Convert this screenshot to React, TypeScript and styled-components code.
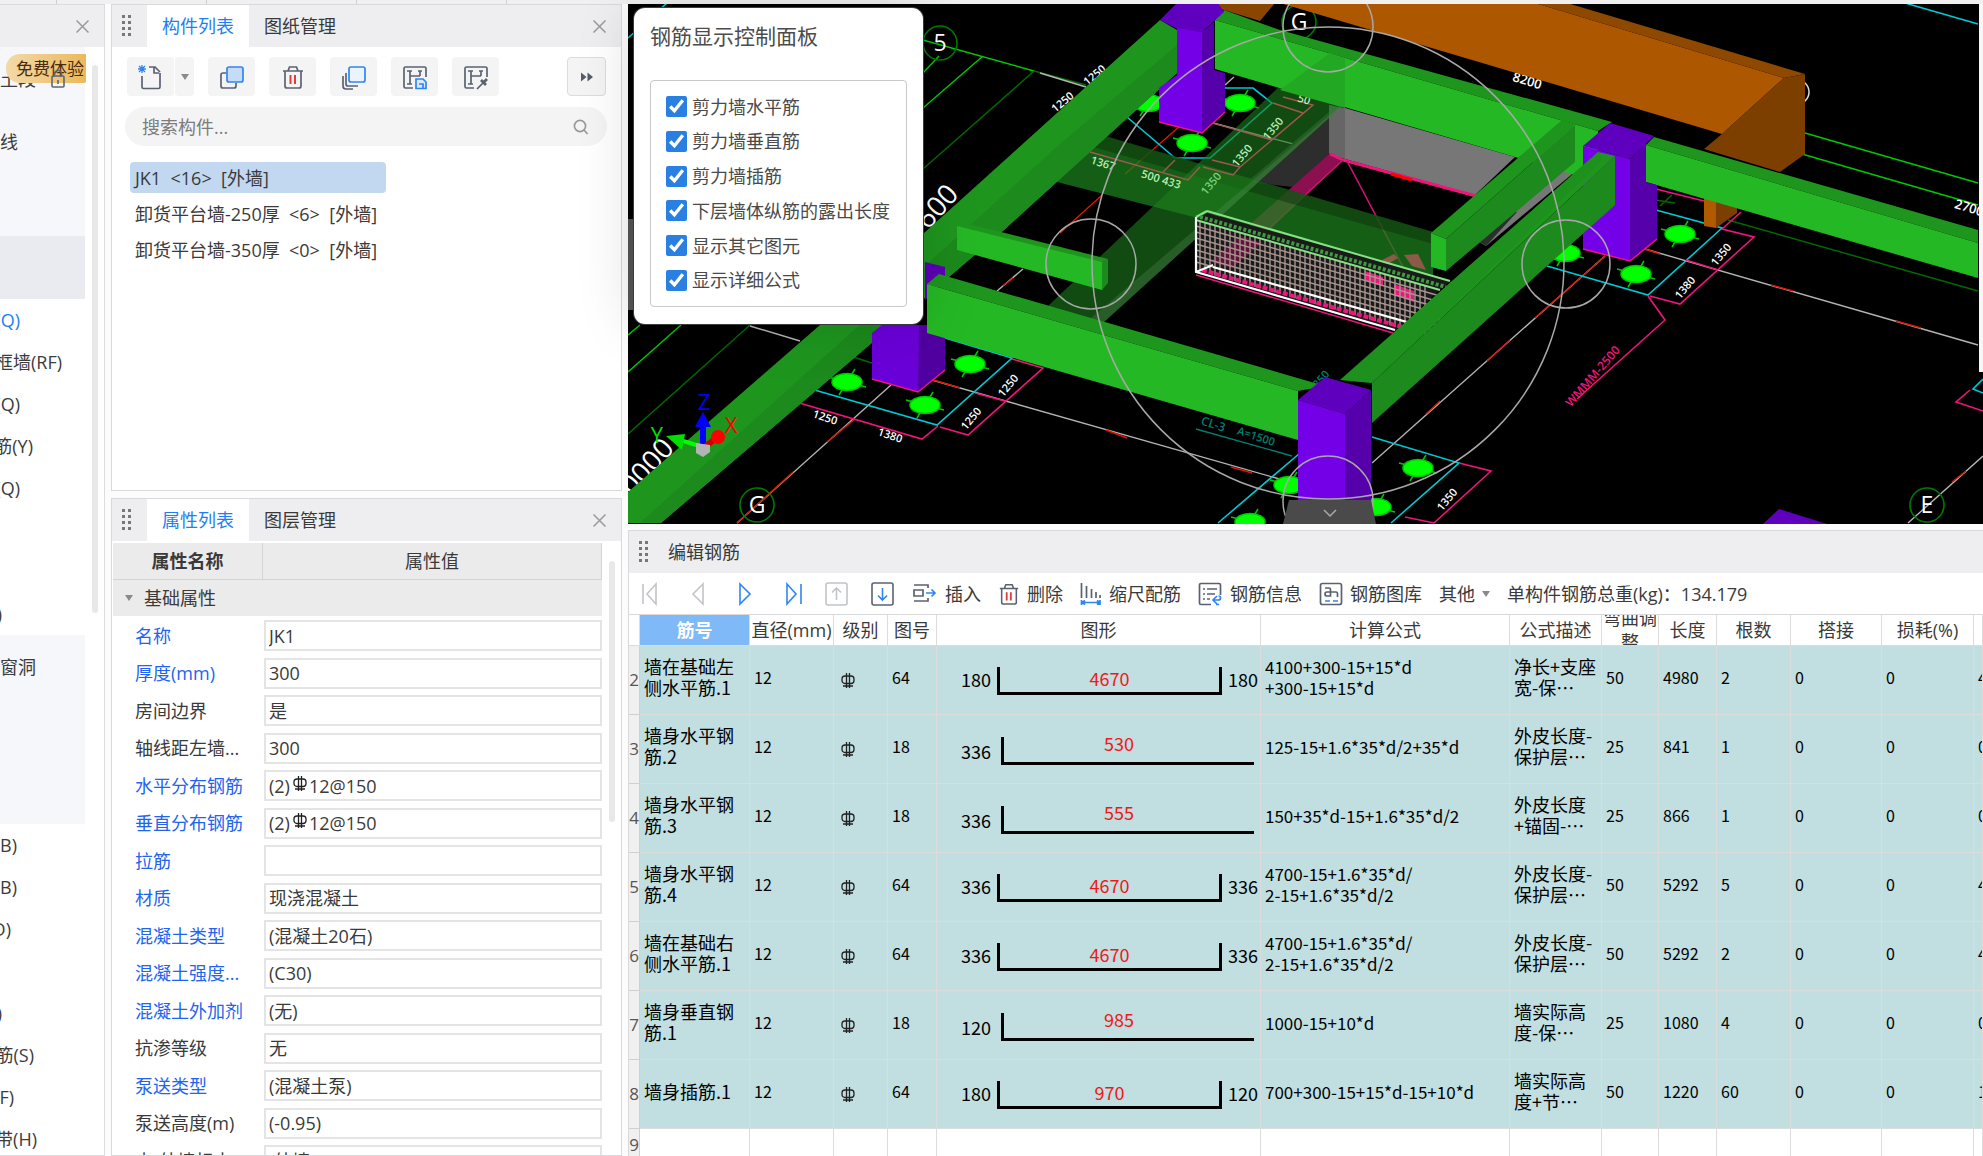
import React, { useState } from 'react';
import styled, { createGlobalStyle, css } from 'styled-components';

const Global = createGlobalStyle`
  * { box-sizing: border-box; }
  body { margin: 0; background: #fcfcfd; color: #3a3a3a; font-family: "Open Sans", "Noto Sans CJK SC", sans-serif; font-size: 18px; line-height: 24px; }
  button, input { font: inherit; color: inherit; }
  button { cursor: pointer; border: 0; background: none; padding: 0; }
`;

/* ---------- shell ---------- */
const Shell = styled.div`
  display: flex;
  flex-direction: column;
  height: 100vh;
  min-height: 700px;
  overflow: hidden;
`;
const RibbonEdge = styled.div`
  flex: none;
  height: 4px;
  background: #f0f0f0;
  display: grid;
  grid-template-columns: 57px repeat(3, 150px) 1fr;
`;
const RibbonGroup = styled.i`
  border-right: 1px solid #d0d0d0;
  &:last-child { border: 0; }
`;
const Columns = styled.main`
  flex: 1;
  min-height: 0;
  display: grid;
  grid-template-columns: 105px 512px minmax(0, 1fr);
  column-gap: 5px;
`;
const TitleBar = styled.header`
  flex: none;
  display: flex;
  align-items: center;
  height: 42px;
  padding: 0 15px 0 9px;
  background: #eeeef0;
`;
const Spacer = styled.span`
  flex: 1;
`;
const CloseButton = styled.button`
  display: flex;
`;

/* ---------- module tree ---------- */
const Side = styled.nav`
  position: relative;
  display: flex;
  flex-direction: column;
  overflow: hidden;
  border: 1px solid #dcdcdf;
  border-left: 0;
  background: #fff;
`;
const SideGroup = styled.div<{ $tint?: boolean; $row: number }>`
  flex: none;
  width: 85px;
  background: ${(p) => (p.$tint ? '#f5f7fa' : 'transparent')};
  display: grid;
  grid-auto-rows: ${(p) => p.$row}px;
`;
const SideItem = styled.a<{ $end: number; $active?: boolean; $open?: boolean }>`
  display: flex;
  align-items: center;
  justify-content: flex-end;
  padding-right: ${(p) => 85 - p.$end}px;
  overflow: hidden;
  white-space: nowrap;
  text-decoration: none;
  color: ${(p) => (p.$active ? '#1f80f0' : '#3c3c3c')};
  background: ${(p) => (p.$open ? '#e9ebf0' : 'transparent')};
`;
const SideThumb = styled.i`
  position: absolute;
  left: 92px;
  top: 60px;
  width: 6px;
  height: 548px;
  border-radius: 3px;
  background: #e8e8e8;
`;
const TrialBadge = styled.span`
  position: absolute;
  left: 6px;
  top: 49px;
  width: 80px;
  height: 29px;
  border-radius: 14px 0 2px 14px;
  padding-left: 10px;
  font-size: 17px;
  line-height: 29px;
  white-space: nowrap;
  color: #4a2a08;
  background: linear-gradient(90deg, #f3d9aa, #ebb95c);
`;
const LockSlot = styled.span`
  position: absolute;
  left: 50px;
  top: 64px;
  display: flex;
`;

/* ---------- middle docks ---------- */
const Middle = styled.div`
  display: flex;
  flex-direction: column;
  gap: 7px;
  min-height: 0;
  padding-left: 1px;
`;
const Dock = styled.section<{ $height?: number }>`
  display: flex;
  flex-direction: column;
  min-height: 0;
  overflow: hidden;
  border: 1px solid #d9d9dc;
  background: #fff;
  flex: ${(p) => (p.$height ? `0 0 ${p.$height}px` : '1')};
`;
const Tabs = styled.div`
  display: flex;
  align-self: stretch;
  margin-left: 15px;
`;
const Tab = styled.button<{ $on?: boolean }>`
  padding: 0 15px;
  color: ${(p) => (p.$on ? '#1f7ef0' : '#3a3a3a')};
  background: ${(p) => (p.$on ? '#fff' : 'transparent')};
`;
const ToolRow = styled.div`
  display: flex;
  gap: 14px;
  padding: 10px 15px 11px 15px;
`;
const toolFace = css`
  display: flex;
  align-items: center;
  justify-content: center;
  height: 39px;
  background: #f4f4f4;
  border-radius: 4px;
`;
const Tool = styled.button`
  ${toolFace}
  width: 47px;
`;
const SplitTool = styled.div`
  display: flex;
  gap: 1px;
`;
const DropTool = styled.button`
  ${toolFace}
  width: 19px;
`;
const MoreTool = styled.button`
  ${toolFace}
  width: 39px;
  border: 1px solid #dcdcdc;
`;
const Search = styled.label`
  display: flex;
  align-items: center;
  height: 39px;
  margin: 0 14px 0 13px;
  padding: 0 18px 0 17px;
  border-radius: 20px;
  background: #f4f4f4;
`;
const SearchInput = styled.input`
  flex: 1;
  border: 0;
  outline: 0;
  padding: 0;
  background: none;
  &::placeholder { color: #7c7c7c; opacity: 1; }
`;
const ComponentList = styled.div`
  display: flex;
  flex-direction: column;
  align-items: flex-start;
  gap: 5px;
  padding: 16px 18px;
`;
const ComponentItem = styled.button<{ $on?: boolean }>`
  width: 256px;
  height: 31px;
  padding-left: 5px;
  text-align: left;
  white-space: pre;
  border-radius: 4px;
  background: ${(p) => (p.$on ? '#c1d8f0' : 'transparent')};
`;

/* ---------- property list ---------- */
const PropBody = styled.div`
  display: flex;
  min-height: 0;
  overflow: hidden;
  padding-top: 2px;
`;
const PropGrid = styled.div`
  width: 490px;
  padding-left: 1px;
`;
const PropHead = styled.div`
  display: grid;
  grid-template-columns: 150px 1fr;
  height: 37px;
  background: #ebebeb;
  border-bottom: 1px solid #d4d4d4;
`;
const PropHeadCell = styled.div<{ $strong?: boolean }>`
  display: flex;
  align-items: center;
  justify-content: center;
  border-right: 1px solid #d4d4d4;
  font-weight: ${(p) => (p.$strong ? 600 : 400)};
`;
const PropGroup = styled.button`
  display: flex;
  align-items: center;
  gap: 11px;
  width: 100%;
  height: 36px;
  padding-left: 12px;
  margin-bottom: 1px;
  background: #ebebeb;
`;
const PropRow = styled.div`
  display: grid;
  grid-template-columns: 129px 1fr;
  align-items: center;
  height: 37px;
  padding-left: 22px;
  &:nth-child(even) { height: 38px; }
`;
const PropLabel = styled.label<{ $key?: boolean }>`
  white-space: nowrap;
  color: ${(p) => (p.$key ? '#2264f0' : '#3a3a3a')};
`;
const Field = styled.div`
  display: flex;
  align-items: center;
  height: 31px;
  padding: 0 3px;
  border: 2px solid #e4e4e4;
`;
const FieldInput = styled.input`
  flex: 1;
  min-width: 0;
  border: 0;
  outline: 0;
  padding: 0;
  background: none;
`;
const FieldMark = styled.span`
  display: flex;
  padding: 0 2px 5px 3px;
`;
const PropThumb = styled.i`
  width: 6px;
  height: 261px;
  margin: 18px 0 0 7px;
  border-radius: 3px;
  background: #e8e8e8;
`;

/* ---------- work area ---------- */
const Work = styled.div`
  display: flex;
  flex-direction: column;
  gap: 6px;
  min-width: 0;
  min-height: 0;
  padding-left: 1px;
`;
const Viewport = styled.section`
  position: relative;
  flex: 0 0 520px;
  background: #000;
`;
const Scene = styled.svg`
  display: block;
  width: 100%;
  height: 100%;
`;
const Panel = styled.aside`
  position: absolute;
  left: 6px;
  top: 4px;
  width: 289px;
  padding: 15px 16px 17px;
  border-radius: 11px;
  background: #fff;
  box-shadow: 0 0 0 1px #3b3b3b, 0 0 60px rgba(0, 0, 0, 0.14);
`;
const PanelTitle = styled.h2`
  margin: 0 0 31px;
  font-size: 21px;
  line-height: 26px;
  font-weight: 400;
  color: #4c4c4c;
`;
const CheckGroup = styled.div`
  display: flex;
  flex-direction: column;
  justify-content: space-between;
  height: 227px;
  padding: 15px;
  border: 1px solid #c9c9c9;
  border-radius: 4px;
`;
const CheckRow = styled.label`
  display: flex;
  align-items: center;
  gap: 5px;
  height: 21px;
  white-space: nowrap;
  color: #4a4a4a;
`;
const Check = styled.input`
  width: 21px;
  height: 21px;
  margin: 0;
  accent-color: #2a80e2;
`;
const EditDock = styled.section`
  flex: 1;
  display: flex;
  flex-direction: column;
  min-height: 0;
  overflow: hidden;
  border-top: 1px solid #d9d9dc;
  border-left: 1px solid #d9d9dc;
  background: #fff;
`;
const DockTitle = styled.h2`
  margin: 0 0 0 19px;
  font-size: 18px;
  font-weight: 400;
`;
const EditTools = styled.div`
  flex: none;
  display: flex;
  align-items: center;
  height: 42px;
  padding-left: 11px;
  border-bottom: 1px solid #d9d9dc;
  white-space: nowrap;
`;
const NavButtons = styled.div`
  display: flex;
  align-items: center;
  gap: 20px;
  margin-right: 17px;
`;
const NavButton = styled.button`
  display: flex;
`;
const TextButton = styled.button`
  display: flex;
  align-items: center;
  gap: 7px;
  margin-right: 17px;
`;

/* ---------- bar table ---------- */
const BarTable = styled.table`
  width: 100%;
  table-layout: fixed;
  border-collapse: separate;
  border-spacing: 0;
  color: #000;
  font-family: "Noto Sans CJK SC", sans-serif;
`;
const Th = styled.th<{ $on?: boolean }>`
  height: 31px;
  padding: 0;
  font-family: "Open Sans", "Noto Sans CJK SC", sans-serif;
  font-weight: ${(p) => (p.$on ? 600 : 400)};
  color: ${(p) => (p.$on ? '#fff' : '#3a3a3a')};
  background: ${(p) => (p.$on ? '#80b9f8' : '#fff')};
  border-right: 1px solid #dcdcdc;
  border-bottom: 1px solid #dcdcdc;
`;
const ThClip = styled.div`
  display: flex;
  align-items: center;
  justify-content: center;
  height: 30px;
  overflow: hidden;
`;
const RowNo = styled.th`
  padding: 0;
  overflow: hidden;
  font: 400 17px/24px "Open Sans", sans-serif;
  color: #555;
  background: #f0f0f0;
  border-right: 1px solid #d0d0d0;
  border-bottom: 1px solid #d0d0d0;
`;
const Td = styled.td<{ $kind?: 'name' | 'num' | 'calc' | 'shape'; $blank?: boolean }>`
  height: ${(p) => (p.$blank ? 33 : 69)}px;
  padding: 0 0 6px 4px;
  overflow: hidden;
  white-space: pre;
  line-height: 21px;
  background: ${(p) => (p.$blank ? '#fff' : '#c1dee0')};
  border-right: 1px solid #dcdcdc;
  border-bottom: 1px solid #dcdcdc;
  font-size: ${(p) => (p.$kind === 'num' ? 16 : p.$kind === 'calc' ? 17 : 18)}px;
  ${(p) => p.$kind === 'shape' && css`padding: 0;`}
`;
const MarkCell = styled.span`
  display: flex;
  padding: 6px 0 0 3px;
`;
const UShape = styled.div`
  display: grid;
  grid-template-columns: 54px 225px 1fr;
  column-gap: 6px;
  align-items: center;
  height: 68px;
  padding-bottom: 2px;
  text-align: center;
`;
const BarEnd = styled.span`
  text-align: right;
`;
const UBar = styled.span`
  height: 28px;
  line-height: 22px;
  margin-top: 3px;
  color: #f21818;
  border: 3px solid #000;
  border-top: 0;
`;
const UTail = styled.span`
  text-align: left;
`;
const LShape = styled.div`
  display: grid;
  grid-template-columns: 54px 253px;
  column-gap: 10px;
  align-items: end;
  height: 68px;
  padding-bottom: 18px;
  line-height: 27px;
`;
const LBar = styled.span`
  height: 28px;
  line-height: 13px;
  padding-right: 20px;
  text-align: center;
  color: #f21818;
  border-left: 3px solid #000;
  border-bottom: 3px solid #000;
`;

/* ---------- icons ---------- */
const Cross = () => (
  <svg width="13" height="13" viewBox="0 0 13 13" stroke="#9a9a9c" strokeWidth="1.5"><path d="M0.5 0.5l12 12M12.5 0.5l-12 12" /></svg>
);
const Grip = () => (
  <svg width="11" height="22" viewBox="0 0 11 22" fill="#77777a">
    {[0, 6, 12, 18].map((y) => <g key={y}><rect x="1" y={y} width="3" height="3" /><rect x="7" y={y} width="3" height="3" /></g>)}
  </svg>
);
const Caret = () => <svg width="8" height="6" viewBox="0 0 8 6" fill="#8a8a8a"><path d="M0 0h8L4 6z" /></svg>;
const Magnifier = () => (
  <svg width="16" height="16" viewBox="0 0 16 16" fill="none" stroke="#999" strokeWidth="1.7"><circle cx="7" cy="7" r="5.6" /><path d="M11 11l3.6 4" /></svg>
);
const Lock = () => (
  <svg width="16" height="20" viewBox="0 0 16 20" fill="none" stroke="#5f6570" strokeWidth="1.6"><rect x="2" y="7" width="12" height="11" rx="1" /><path d="M4.500 7V5a3.500 3.500 0 0 1 7 0v2M8 11v4" /></svg>
);
const ink = { fill: 'none', stroke: '#5a6272', strokeWidth: 1.7 };
const NewIcon = () => (
  <svg width="26" height="26" viewBox="0 0 26 26" {...ink}>
    <path d="M11 3h6l5 5M16 3v6h5M22 9v14a1.500 1.500 0 0 1-1.500 1.500h-15A1.500 1.500 0 0 1 4 23V12" />
    <path d="M1 2l6 6M7 2L1 8M4 1v8M0 5h8" stroke="#2f86f0" strokeWidth="1.300" />
  </svg>
);
const CopyIcon = () => (
  <svg width="26" height="26" viewBox="0 0 26 26" {...ink}>
    <path d="M7 9H4a2 2 0 0 0-2 2v11a2 2 0 0 0 2 2h11a2 2 0 0 0 2-2v-3" /><rect x="8" y="3" width="16" height="15" rx="2" fill="#c5dbf6" stroke="#2f86f0" />
  </svg>
);
const TrashIcon = ({ size = 24 }: { size?: number }) => (
  <svg width={size} height={size + 2} viewBox="0 0 24 26" {...ink}>
    <path d="M2 7h20M7 7l1.500-4h7L17 7M4 7v15a2 2 0 0 0 2 2h12a2 2 0 0 0 2-2V7" /><path d="M9.500 11v9M14 11v9" stroke="#e03c3c" strokeWidth="2" />
  </svg>
);
const StackIcon = () => (
  <svg width="26" height="26" viewBox="0 0 26 26" {...ink}>
    <path d="M5 9v11a2 2 0 0 0 2 2h10M2 12v10a3 3 0 0 0 3 3h7" /><rect x="8" y="3" width="16" height="15" rx="2" fill="#eaf3fe" stroke="#2f86f0" />
  </svg>
);
const FrameIcon = ({ kind }: { kind: 'save' | 'pick' }) => (
  <svg width="26" height="26" viewBox="0 0 26 26" {...ink}>
    <path d="M11 24H3.500A1.500 1.500 0 0 1 2 22.500v-18A1.500 1.500 0 0 1 3.500 3h19A1.500 1.500 0 0 1 24 4.500V13" /><path d="M8 7v13M8 12h10M18 7v5M5 7h5M16 7h4M5 20h5" />
    {kind === 'save'
      ? <path d="M14 15h7l3 3v6.500H14zM17 20h4v4" stroke="#2f86f0" fill="#dbe9fb" />
      : <><path d="M14 25l7-7" /><path d="M18 16l5 5M21 18l3-3" strokeWidth="2.800" /></>}
  </svg>
);
const MoreIcon = () => <svg width="12" height="10" viewBox="0 0 12 10" fill="#555c68"><path d="M0 0.500L5.500 5 0 9.500zM6.500 0.500L12 5l-5.500 4.500z" /></svg>;
const RebarMark = () => (
  <svg width="14" height="15" viewBox="0 0 14 15" fill="none" stroke="#222" strokeWidth="1.300"><rect x="1" y="3" width="12" height="7.500" rx="3" /><path d="M5.500 0v15M8.500 0v15M2 13h10" /></svg>
);
const NavIcon = ({ d, on, box }: { d: string; on?: boolean; box?: boolean }) => (
  <svg width="26" height="24" viewBox="0 0 26 24" fill="none" stroke={on ? '#2f86f0' : '#c2c4c8'} strokeWidth="1.600">
    {box && <rect x="2" y="1" width="21" height="22" rx="2" stroke={on ? '#5a6272' : '#c2c4c8'} />}
    <path d={d} />
  </svg>
);
const InsertIcon = () => (
  <svg width="25" height="24" viewBox="0 0 25 24" {...ink}><path d="M1 3h14v3M1 19h14v-3M1 8h9v6H1z" /><path d="M13 11h9M18.500 7.500L22 11l-3.500 3.500" stroke="#2f86f0" /></svg>
);
const ScaleIcon = () => (
  <svg width="22" height="24" viewBox="0 0 22 24" {...ink}><path d="M1.500 1v15M6.500 4v12M11.500 7v9M16 10v6M20 13v3" /><path d="M1.500 18v5M20 18v5M2 20.500h18M5 18.500l-3 2 3 2M17 18.500l3 2-3 2" stroke="#2f86f0" /></svg>
);
const InfoIcon = () => (
  <svg width="25" height="24" viewBox="0 0 25 24" {...ink}><path d="M13 22.500H3A1.500 1.500 0 0 1 1.500 21V3A1.500 1.500 0 0 1 3 1.500h18A1.500 1.500 0 0 1 22.500 3v10M5 7h2M9 7h10M5 12h2M9 12h8M5 17h2M9 17h3" /><path d="M19 14l-4 4 4 4M15.500 18h5a2 2 0 0 0 0-4M18 22.500h3" stroke="#2f86f0" /></svg>
);
const LibIcon = () => (
  <svg width="24" height="24" viewBox="0 0 24 24" {...ink}><rect x="1.500" y="1.500" width="21" height="21" rx="2" /><path d="M6 6h4a1.500 1.500 0 0 1 1.500 1.500V14H8a2 2 0 0 1 0-4h9a1.500 1.500 0 0 1 1.500 1.500V15" /><path d="M6 19h5M14 19h5" stroke="#2f86f0" /></svg>
);

/* ---------- 3D scene ---------- */
const blobs = [[847, 382], [970, 364], [925, 405], [1148, 103], [1240, 103], [1192, 143], [1680, 234], [1636, 274], [1565, 253], [1418, 468], [1289, 485], [1250, 522], [1376, 507]];
type Note = [number, number, number, string, string, number];
const notes: Note[] = [
  [824, 421, 18, '1250', '#fff', 11], [889, 439, 18, '1380', '#fff', 11], [1011, 388, -50, '1250', '#fff', 11], [974, 421, -50, '1250', '#fff', 11],
  [1097, 78, -40, '1250', '#fff', 11], [1065, 105, -40, '1250', '#fff', 11], [1526, 85, 17, '8200', '#fff', 13], [1968, 212, 17, '2700', '#fff', 13],
  [1724, 257, -50, '1350', '#fff', 11], [1688, 290, -50, '1380', '#fff', 11], [1450, 502, -50, '1350', '#fff', 11],
  [944, 213, -48, '600', '#fff', 28], [654, 473, -48, '0000', '#fff', 28],
];
const slabNotes: Note[] = [
  [1102, 167, 17, '1367', '#b8f0b8', 11], [1160, 183, 17, '500 433', '#b8f0b8', 11], [1214, 186, -50, '1350', '#7fd07f', 11],
  [1245, 158, -50, '1350', '#b8f0b8', 11], [1276, 131, -50, '1350', '#b8f0b8', 11], [1303, 103, 17, '50', '#b8f0b8', 11],
];
const axisNames: [number, number, string][] = [[940, 43, '5'], [1299, 22, 'G'], [757, 505, 'G'], [1927, 505, 'E']];
const mesh = Array.from({ length: 46 }, (_, i) => 1200 + i * 5);
const F = 'Open Sans, sans-serif';
const top = '#1e961e';
const front = '#25b825';
const shade = '#1c8a1c';

const Label = ({ n }: { n: Note }) => (
  <text x={n[0]} y={n[1]} transform={`rotate(${n[2]} ${n[0]} ${n[1]})`} fill={n[4]} fontSize={n[5]} fontWeight={n[5] < 20 ? 600 : 400} fontFamily={F} textAnchor="middle">{n[3]}</text>
);

const Model = () => (
  <Scene viewBox="628 4 1355 520" preserveAspectRatio="xMinYMin slice" role="img" aria-label="三维钢筋模型">
    <rect x="628" y="3" width="1355" height="521" fill="#000" />
    <rect x="628" y="219" width="8" height="91" fill="#555" />
    <g fill="none" stroke="#00c800" strokeWidth="1.5">
      <path d="M923 40L1034 71M983 56L923 108M939 56L923 73M640 325L628 335M681 325L628 372M1805 133L1978 183M1802 154L1978 205" />
      <path d="M1034 71L923 169M750 325L628 434M1728 220L1978 291M1034 71L1086 85M1655 200L1675 203M1660 206L1672 195M847 355L875 364" stroke="#006a00" />
    </g>
    <g fill="none" stroke="#b4b4b4" strokeWidth="1.400">
      <path d="M750 326L800 341M1040 73L1086 87M932 380L1283 480M737 523L891 385M1645 249L1978 345M1605 256L1372 463M1908 523L1983 456M997 291L1023 269M1213 123L1347 158M1225 85L1234 77" />
      <path d="M737 523L793 472M827 442L855 419M930 379L960 388M1106 430L1127 438M1231 467L1252 473M1645 249L1660 254M1771 285L1793 291M1896 321L1921 328M1605 256L1535 318M1510 340L1487 361M1440 401L1426 414M1952 482L1966 471M1003 286L1013 278M1060 233L1101 196M1125 174L1180 126" stroke="#e01400" />
    </g>
    <g fill="none" stroke="#00c8d2" strokeWidth="1.600">
      <path d="M811 389L937 425L1012 358L945 338M1127 117L1175 158H1210L1272 103L1253 88H1225M1656 210L1722 228L1648 295L1547 266M1218 523L1300 453M1372 437L1459 463L1391 523M1905 3L1978 24M628 38L667 3M1983 379L1973 389L1983 393" />
    </g>
    <g fill="none" stroke="#f0147c" strokeWidth="1.600">
      <path d="M796 402L922 439L938 426M940 427L968 435L1043 368L1012 359M975 393L1005 401M1656 189L1704 201M1741 212L1722 229L1754 237L1680 304L1650 296M1686 260L1718 270M1648 296L1665 320L1577 399M1459 463L1491 471L1434 523L1405 517M1983 411L1956 402L1970 390" />
    </g>
    <g stroke="#00c800" strokeWidth="1.500">
      {blobs.map(([x, y]) => <g key={`${x}-${y}`}><path d={`M${x - 19} ${y - 5}l38 10M${x + 8} ${y - 13}l-16 26`} /><ellipse cx={x} cy={y} rx="15" ry="8.500" fill="#00ff00" /></g>)}
    </g>
    {notes.map((n, i) => <Label key={i} n={n} />)}
    <Label n={[1596, 379, -49, 'WMMM-2500', '#f0147c', 12]} />
    <g stroke="#00806e" strokeWidth="1.400"><path d="M1196 429L1292 456" /></g>
    <Label n={[1212, 428, 18, 'CL-3', '#00806e', 12]} />
    <Label n={[1255, 440, 18, 'A=1500', '#00806e', 11]} />
    <Label n={[1322, 384, -50, '1350', '#00806e', 11]} />
    <g fill="none" stroke="#007a00" strokeWidth="1.600">
      {axisNames.map(([x, y, s]) => <circle key={s + x} cx={x} cy={y} r="17" />)}
    </g>
    <circle cx="1797" cy="92" r="12" fill="none" stroke="#ddd" strokeWidth="1.500" />

    <path d="M1329 105L1345 108V159L1329 154z" fill="#666" />
    <path d="M1345 108L1515 157L1475 195L1345 159z" fill="#777" />
    <path d="M1329 112V154L1293 187L1247 182z" fill="#2d2d2d" />
    <path d="M1330 153L1343 160L1227 270L1207 263z" fill="#8c1050" />
    <path d="M1343 160L1476 196M1330 154L1343 160" stroke="#f0147c" strokeWidth="3" />
    <path d="M1347 161L1423 305M1343 160L1220 274" stroke="#c81470" strokeWidth="1.600" fill="none" />
    <path d="M1391 174L1412 180" stroke="#f00" strokeWidth="3" />
    <path d="M1575 160L1577 170L1486 246L1477 241z" fill="#777" />
    <path d="M1517 212L1505 211L1477 241L1486 246z" fill="#2d2d2d" />

    <path d="M1057 122L1433 232L1433 278L1057 182z" fill="#1c7d1c" opacity="0.75" />
    <path d="M1100 134L1433 232V244L1090 146z" fill="#0a2e0a" opacity="0.45" />
    <path d="M1282 84L1345 102L1329 118L1103 323L1047 307z" fill="#1c7d1c" opacity="0.6" />
    <path d="M1345 102L1329 118L1103 323L1090 319z" fill="#5d8c5d" opacity="0.300" />
    <path d="M1090 152L1188 180L1200 167M1163 172L1175 160M1212 160L1240 167L1313 105L1283 97M1273 103L1303 113M1203 167L1233 175L1240 167M1213 123L1272 140" fill="none" stroke="#9c5a50" strokeWidth="1.400" />
    {slabNotes.map((n, i) => <Label key={i} n={n} />)}

    <g fill="none">
      <path d="M1207 213L1450 281L1395 331L1196 273V220z" fill="#1a1a1a" />
      <path d="M1210 262L1240 236L1262 243L1232 268z" fill="#8c1050" opacity="0.6" />
      <path d="M1365 271l18 6v9l-18-6zM1394 284l20 7v11l-20-7z" fill="#f0147c" />
      <path d="M1382 260l12-6 4 4-10 6zM1404 255l14-1 8 16-14-4z" fill="#8d5a4a" />
      <g stroke="#a8958f" strokeWidth="1.400">
        {mesh.map((x) => <path key={x} d={`M${x} ${220 + (x - 1196) * 0.285}v50`} />)}
        {[6, 12, 18, 24, 30, 36, 42].map((d) => <path key={d} d={`M1196 ${220 + d}L1440 ${290 + d}`} />)}
      </g>
      <path d="M1207 211L1450 281M1196 220L1440 290M1196 217L1207 211" stroke="#86e086" strokeWidth="2" />
      <path d="M1200 217L1446 287" stroke="#3f9a3f" strokeWidth="4" strokeDasharray="3 2" />
      <path d="M1202 270L1402 327" stroke="#f0147c" strokeWidth="4" strokeDasharray="5 2" />
      <path d="M1196 217V272L1395 330M1213 267L1407 322M1196 272L1213 265" stroke="#fff" strokeWidth="2.200" />
      <path d="M1196 275L1393 333" stroke="#f0147c" strokeWidth="1.600" />
    </g>

    <path d="M1201 3H1275L1260 21L1224 10z" fill="#8a4500" />
    <path d="M1280 3H1535L1784 78L1722 134z" fill="#ad5700" />
    <path d="M1535 3H1567L1805 74L1784 78z" fill="#8f4800" />
    <path d="M1805 74V154L1780 172L1704 149L1722 134L1784 78z" fill="#7d3f00" />
    <path d="M1704 196H1716V228L1704 226z" fill="#b05a00" />
    <path d="M1716 196L1737 204V213L1716 228z" fill="#7d3f00" />

    <path d="M1160 20L1177 30V73L1004 230L661 523H628V492L820 325L924 233z" fill={top} />
    <path d="M1177 45V73L1004 230L661 523H640L1060 144z" fill={shade} />
    <path d="M925 262L945 267V280L925 300z" fill="#5b00b5" />
    <path d="M957 221L1108 259L1102 263L957 227z" fill={top} />
    <path d="M957 226L1102 262V290L957 250z" fill={front} />
    <path d="M1102 261L1108 259V283L1102 290z" fill={shade} />

    <path d="M1224 10L1280 30L1612 122L1598 131L1215 20z" fill={top} />
    <path d="M1215 20L1598 131V182L1515 157L1215 69z" fill={front} />
    <path d="M1330 53L1345 58V108L1280 90z" fill="#22a822" />
    <path d="M1654 137L1978 230V243L1646 145z" fill={top} />
    <path d="M1646 145L1978 243V278L1646 182z" fill={front} />
    <path d="M1562 120L1575 125L1446 239L1431 233z" fill={top} />
    <path d="M1575 125V162L1446 271V239z" fill={shade} />
    <path d="M1431 233L1446 239V271L1431 267z" fill={front} />

    <path d="M1177 3H1218L1224 12L1202 32L1177 29L1160 20z" fill="#6000bf" />
    <path d="M1177 28L1202 32V133L1159 122V88L1177 75z" fill="#7300e6" />
    <path d="M1202 32L1214 22V70L1225 73V112L1202 133z" fill="#5500aa" />
    <path d="M1159 122L1202 133L1225 112" fill="none" stroke="#f0147c" strokeWidth="1.500" />
    <path d="M1610 123L1654 136L1630 159L1583 146z" fill="#6000bf" />
    <path d="M1583 146L1630 159V261L1583 249z" fill="#7300e6" />
    <path d="M1630 159L1646 143V182L1657 185V239L1630 261z" fill="#5500aa" />
    <path d="M1583 249L1630 261L1657 239" fill="none" stroke="#f0147c" strokeWidth="1.500" />
    <path d="M1598 152L1615 156L1372 383L1340 380z" fill={top} />
    <path d="M1615 156V205L1372 423V383z" fill={shade} />
    <path d="M1372 383L1340 380L1598 152L1602 160z" fill={shade} opacity="0.500" />

    <path d="M872 333L882 325H945V370L918 392L872 379z" fill="#6a00d8" />
    <path d="M919 325H945V370L918 392z" fill="#5000a0" />
    <path d="M872 379L918 392L945 370" fill="none" stroke="#f0147c" strokeWidth="1.500" />
    <path d="M939 274L1325 386L1298 391L927 284z" fill={top} />
    <path d="M927 284L1298 391V440L927 333z" fill={front} />
    <path d="M1325 377L1371 390L1345 414L1298 400z" fill="#6000bf" />
    <path d="M1298 400L1345 414V500H1298z" fill="#7300e6" />
    <path d="M1345 414L1371 390V500H1345z" fill="#5500aa" />
    <path d="M1779 509L1827 524H1763z" fill="#6000bf" />

    {axisNames.map(([x, y, s]) => <text key={s + x} x={x} y={y + 8} fill="#fff" fontSize="23" fontFamily={F} textAnchor="middle">{s}</text>)}
    <g fill="none" stroke="#a8a8a8" strokeWidth="1.500">
      <circle cx="1328" cy="263" r="236" /><circle cx="1091" cy="264" r="45" /><circle cx="1566" cy="264" r="44" /><circle cx="1328" cy="27" r="45" /><circle cx="1328" cy="501" r="45" />
    </g>
    <path d="M1289 500H1371L1376 524H1283z" fill="#4a4a4a" />
    <path d="M1324 510l6 6 6-6" fill="none" stroke="#aaa" strokeWidth="1.500" />

    <path d="M703 450V424" stroke="#0000ff" strokeWidth="6" /><path d="M695 427L703 412L711 427z" fill="#0000ff" />
    <path d="M703 447L680 440" stroke="#00ff00" strokeWidth="4" /><path d="M666 436L685 434L682 450z" fill="#00e000" />
    <path d="M706 446L716 438" stroke="#d00000" strokeWidth="6" /><ellipse cx="718" cy="437" rx="7" ry="7" fill="#ff0000" />
    <path d="M696 443L710 445V452L703 457L696 453z" fill="#b4b4b4" />
    <g fontFamily={F} fontSize="22" textAnchor="middle">
      <text x="704" y="410" fill="#0000ff">Z</text><text x="731" y="433" fill="#ff0000">X</text><text x="657" y="443" fill="#00e000">Y</text>
    </g>
    <path d="M1979 3H1983V372H1979z" fill="#f6f6f6" />
  </Scene>
);

/* ---------- data ---------- */
const sideTop: [string, number][] = [['土段', 36], ['线', 18], ['', 0]];
const sideMid: [string, number][] = [['(Q)', 20], ['框墙(RF)', 62], ['(Q)', 20], ['筋(Y)', 33], ['(Q)', 20], ['', 0], ['', 0], [')', 2]];
const sideLow: [string, number][] = [['(B)', 17], ['(B)', 17], ['(D)', 11], ['', 0], [')', 2], ['筋(S)', 34], ['(F)', 14], ['带(H)', 37]];

const checks = ['剪力墙水平筋', '剪力墙垂直筋', '剪力墙插筋', '下层墙体纵筋的露出长度', '显示其它图元', '显示详细公式'];

const props: { label: string; value: string; plain?: boolean; bar?: boolean }[] = [
  { label: '名称', value: 'JK1' }, { label: '厚度(mm)', value: '300' }, { label: '房间边界', value: '是', plain: true },
  { label: '轴线距左墙...', value: '300', plain: true }, { label: '水平分布钢筋', value: '12@150', bar: true }, { label: '垂直分布钢筋', value: '12@150', bar: true },
  { label: '拉筋', value: '' }, { label: '材质', value: '现浇混凝土' }, { label: '混凝土类型', value: '(混凝土20石)' }, { label: '混凝土强度...', value: '(C30)' },
  { label: '混凝土外加剂', value: '(无)' }, { label: '抗渗等级', value: '无', plain: true }, { label: '泵送类型', value: '(混凝土泵)' },
  { label: '泵送高度(m)', value: '(-0.95)', plain: true }, { label: '内/外墙标志', value: '(外墙)', plain: true },
];

const widths = [11, 110, 84, 54, 49, 324, 249, 92, 57, 58, 74, 91, 92];
const heads = ['筋号', '直径(mm)', '级别', '图号', '图形', '计算公式', '公式描述', '弯曲调整', '长度', '根数', '搭接', '损耗(%)', ''];
type Bar = { no: number; name: string; fig: string; l: string; mid: string; r?: string; calc: string; desc: string; nums: string[] };
const bars: Bar[] = [
  { no: 2, name: '墙在基础左\n侧水平筋.1', fig: '64', l: '180', mid: '4670', r: '180', calc: '4100+300-15+15*d\n+300-15+15*d', desc: '净长+支座\n宽-保…', nums: ['50', '4980', '2', '0', '0', '4'] },
  { no: 3, name: '墙身水平钢\n筋.2', fig: '18', l: '336', mid: '530', calc: '125-15+1.6*35*d/2+35*d', desc: '外皮长度-\n保护层…', nums: ['25', '841', '1', '0', '0', '0'] },
  { no: 4, name: '墙身水平钢\n筋.3', fig: '18', l: '336', mid: '555', calc: '150+35*d-15+1.6*35*d/2', desc: '外皮长度\n+锚固-…', nums: ['25', '866', '1', '0', '0', '0'] },
  { no: 5, name: '墙身水平钢\n筋.4', fig: '64', l: '336', mid: '4670', r: '336', calc: '4700-15+1.6*35*d/\n2-15+1.6*35*d/2', desc: '外皮长度-\n保护层…', nums: ['50', '5292', '5', '0', '0', '4'] },
  { no: 6, name: '墙在基础右\n侧水平筋.1', fig: '64', l: '336', mid: '4670', r: '336', calc: '4700-15+1.6*35*d/\n2-15+1.6*35*d/2', desc: '外皮长度-\n保护层…', nums: ['50', '5292', '2', '0', '0', '4'] },
  { no: 7, name: '墙身垂直钢\n筋.1', fig: '18', l: '120', mid: '985', calc: '1000-15+10*d', desc: '墙实际高\n度-保…', nums: ['25', '1080', '4', '0', '0', '0'] },
  { no: 8, name: '墙身插筋.1', fig: '64', l: '180', mid: '970', r: '120', calc: '700+300-15+15*d-15+10*d', desc: '墙实际高\n度+节…', nums: ['50', '1220', '60', '0', '0', '1'] },
];

const BarRow = ({ bar }: { bar: Bar }) => (
  <tr>
    <RowNo scope="row">{bar.no}</RowNo>
    <Td $kind="name">{bar.name}</Td>
    <Td $kind="num">12</Td>
    <Td><MarkCell><RebarMark /></MarkCell></Td>
    <Td $kind="num">{bar.fig}</Td>
    <Td $kind="shape">
      {bar.r
        ? <UShape><BarEnd>{bar.l}</BarEnd><UBar>{bar.mid}</UBar><UTail>{bar.r}</UTail></UShape>
        : <LShape><BarEnd>{bar.l}</BarEnd><LBar>{bar.mid}</LBar></LShape>}
    </Td>
    <Td $kind="calc">{bar.calc}</Td>
    <Td $kind="name">{bar.desc}</Td>
    {bar.nums.map((n, i) => <Td key={i} $kind="num">{n}</Td>)}
  </tr>
);

const DockHeader = ({ tabs }: { tabs: [string, string] }) => (
  <TitleBar>
    <Grip />
    <Tabs role="tablist">
      <Tab role="tab" aria-selected $on>{tabs[0]}</Tab>
      <Tab role="tab" aria-selected={false}>{tabs[1]}</Tab>
    </Tabs>
    <Spacer />
    <CloseButton aria-label="关闭"><Cross /></CloseButton>
  </TitleBar>
);

export default function App() {
  const [picked, setPicked] = useState(0);
  const components = ['JK1  <16>  [外墙]', '卸货平台墙-250厚  <6>  [外墙]', '卸货平台墙-350厚  <0>  [外墙]'];
  return (
    <Shell>
      <Global />
      <RibbonEdge>{[0, 1, 2, 3, 4].map((i) => <RibbonGroup key={i} />)}</RibbonEdge>
      <Columns>
        <Side>
          <TitleBar><Spacer /><CloseButton aria-label="关闭"><Cross /></CloseButton></TitleBar>
          <SideGroup $tint $row={63}>
            {sideTop.map(([t, e], i) => <SideItem key={i} href="#" $end={e}>{t}</SideItem>)}
            <SideItem href="#" $end={0} $open />
          </SideGroup>
          <SideGroup $row={42}>
            {sideMid.map(([t, e], i) => <SideItem key={i} href="#" $end={e} $active={i === 0}>{t}</SideItem>)}
          </SideGroup>
          <SideGroup $tint $row={63}>
            <SideItem href="#" $end={36}>窗洞</SideItem>
            <SideItem href="#" $end={0} />
            <SideItem href="#" $end={0} />
          </SideGroup>
          <SideGroup $row={42}>
            {sideLow.map(([t, e], i) => <SideItem key={i} href="#" $end={e}>{t}</SideItem>)}
          </SideGroup>
          <TrialBadge>免费体验</TrialBadge>
          <LockSlot><Lock /></LockSlot>
          <SideThumb />
        </Side>

        <Middle>
          <Dock $height={487}>
            <DockHeader tabs={['构件列表', '图纸管理']} />
            <ToolRow>
              <SplitTool>
                <Tool aria-label="新建"><NewIcon /></Tool>
                <DropTool aria-label="新建选项"><Caret /></DropTool>
              </SplitTool>
              <Tool aria-label="复制"><CopyIcon /></Tool>
              <Tool aria-label="删除"><TrashIcon /></Tool>
              <Tool aria-label="层间复制"><StackIcon /></Tool>
              <Tool aria-label="存档"><FrameIcon kind="save" /></Tool>
              <Tool aria-label="提取"><FrameIcon kind="pick" /></Tool>
              <Spacer />
              <MoreTool aria-label="更多"><MoreIcon /></MoreTool>
            </ToolRow>
            <Search>
              <SearchInput placeholder="搜索构件..." aria-label="搜索构件" />
              <Magnifier />
            </Search>
            <ComponentList>
              {components.map((c, i) => <ComponentItem key={c} $on={i === picked} onClick={() => setPicked(i)}>{c}</ComponentItem>)}
            </ComponentList>
          </Dock>

          <Dock>
            <DockHeader tabs={['属性列表', '图层管理']} />
            <PropBody>
              <PropGrid>
                <PropHead><PropHeadCell $strong>属性名称</PropHeadCell><PropHeadCell>属性值</PropHeadCell></PropHead>
                <PropGroup><Caret />基础属性</PropGroup>
                {props.map((p, i) => (
                  <PropRow key={p.label}>
                    <PropLabel htmlFor={`prop-${i}`} $key={!p.plain}>{p.label}</PropLabel>
                    <Field>
                      {p.bar && <><span>(2)</span><FieldMark><RebarMark /></FieldMark></>}
                      <FieldInput id={`prop-${i}`} defaultValue={p.value} />
                    </Field>
                  </PropRow>
                ))}
              </PropGrid>
              <PropThumb />
            </PropBody>
          </Dock>
        </Middle>

        <Work>
          <Viewport>
            <Model />
            <Panel>
              <PanelTitle>钢筋显示控制面板</PanelTitle>
              <CheckGroup>
                {checks.map((c) => <CheckRow key={c}><Check type="checkbox" defaultChecked />{c}</CheckRow>)}
              </CheckGroup>
            </Panel>
          </Viewport>

          <EditDock>
            <TitleBar><Grip /><DockTitle>编辑钢筋</DockTitle></TitleBar>
            <EditTools>
              <NavButtons>
                <NavButton aria-label="首条"><NavIcon d="M3 2v20M16 2L7 12l9 10z" /></NavButton>
                <NavButton aria-label="上一条"><NavIcon d="M17 2L7 12l10 10z" /></NavButton>
                <NavButton aria-label="下一条"><NavIcon on d="M8 2l10 10L8 22z" /></NavButton>
                <NavButton aria-label="末条"><NavIcon on d="M9 2l9 10-9 10zM23 2v20" /></NavButton>
                <NavButton aria-label="上移"><NavIcon box d="M12.500 18V6M8 10.500L12.500 6l4.500 4.500" /></NavButton>
                <NavButton aria-label="下移"><NavIcon box on d="M12.500 6v12M8 13.500L12.500 18l4.500-4.500" /></NavButton>
              </NavButtons>
              <TextButton><InsertIcon />插入</TextButton>
              <TextButton><TrashIcon size={22} />删除</TextButton>
              <TextButton><ScaleIcon />缩尺配筋</TextButton>
              <TextButton><InfoIcon />钢筋信息</TextButton>
              <TextButton><LibIcon />钢筋图库</TextButton>
              <TextButton>其他<Caret /></TextButton>
              <span>单构件钢筋总重(kg)：134.179</span>
            </EditTools>
            <BarTable>
              <colgroup>{widths.map((w, i) => <col key={i} width={w} />)}<col /></colgroup>
              <thead>
                <tr>
                  <Th />
                  {heads.map((h, i) => <Th key={i} scope="col" $on={i === 0}><ThClip>{h}</ThClip></Th>)}
                </tr>
              </thead>
              <tbody>
                {bars.map((b) => <BarRow key={b.no} bar={b} />)}
                <tr>
                  <RowNo scope="row">9</RowNo>
                  {heads.map((_, i) => <Td key={i} $blank />)}
                </tr>
              </tbody>
            </BarTable>
          </EditDock>
        </Work>
      </Columns>
    </Shell>
  );
}
